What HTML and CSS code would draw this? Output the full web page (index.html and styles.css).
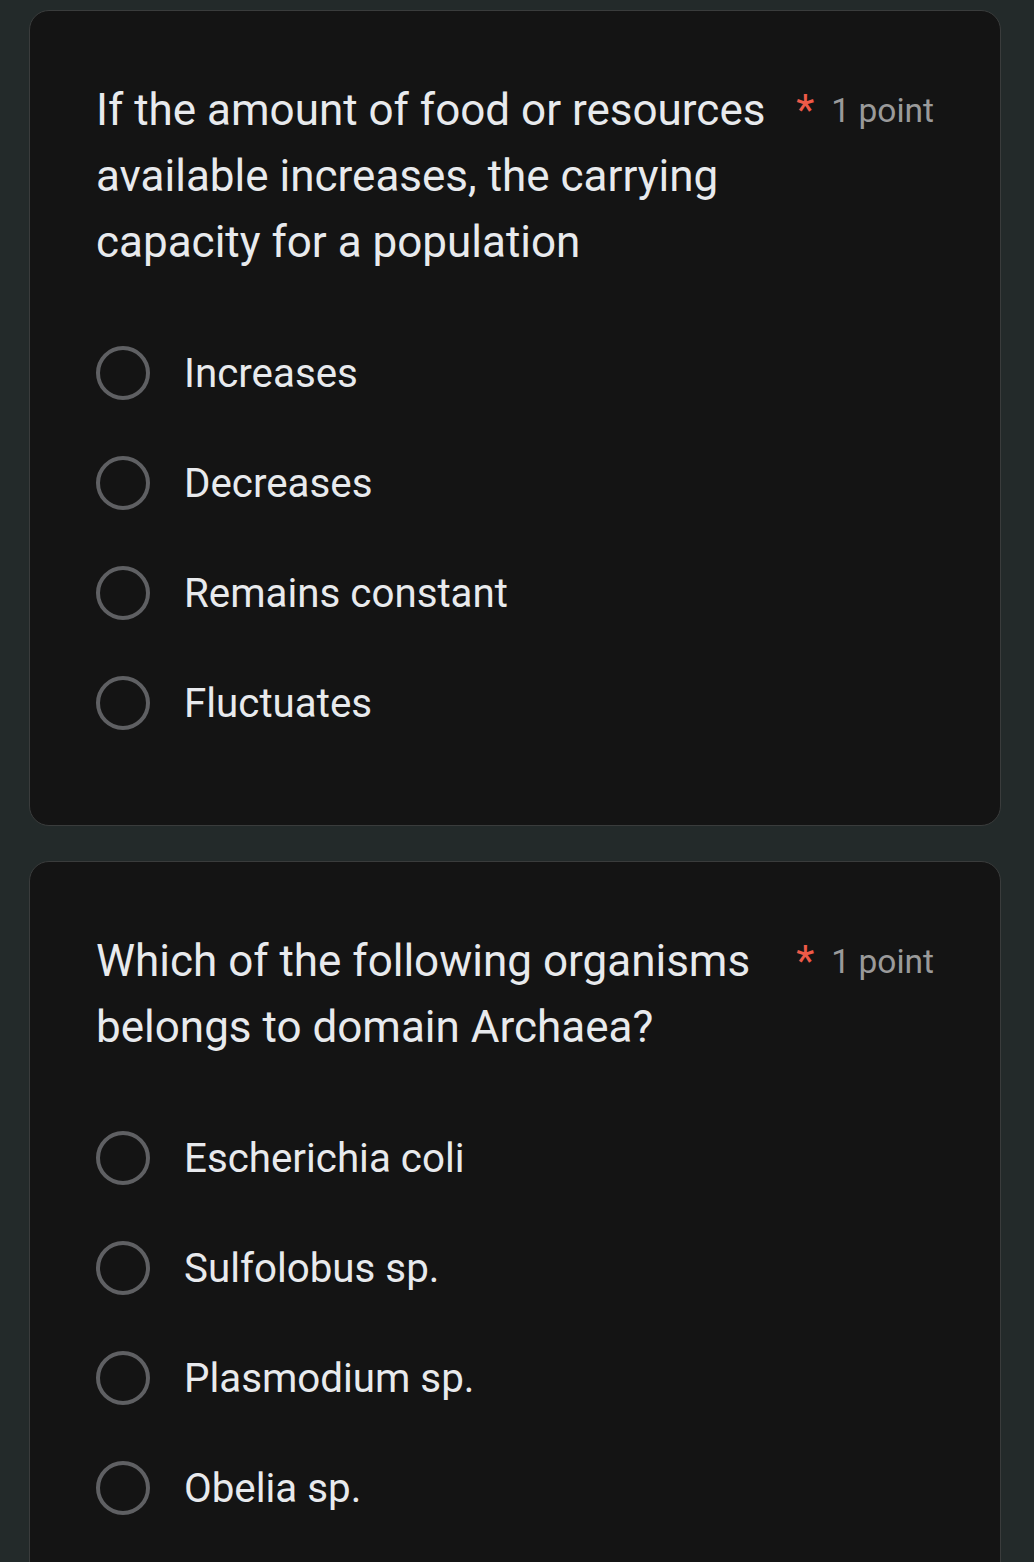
FILE: index.html
```html
<!DOCTYPE html>
<html lang="en">
<head>
    <meta charset="UTF-8">
    <meta name="viewport" content="width=device-width, initial-scale=1.0">
    <title>Quiz</title>
    <link rel="stylesheet" href="styles.css">
</head>
<body>
    <div class="form-list">
        <!-- Question 1 -->
        <div class="question-card">
            <div class="question-head">
                <div class="question-title">If the amount of food or resources available increases, the carrying capacity for a population</div>
                <div class="question-meta"><span class="required">*</span><span class="points">1 point</span></div>
            </div>
            <div class="options">
                <label class="option"><span class="radio"></span><span class="option-text">Increases</span></label>
                <label class="option"><span class="radio"></span><span class="option-text">Decreases</span></label>
                <label class="option"><span class="radio"></span><span class="option-text">Remains constant</span></label>
                <label class="option"><span class="radio"></span><span class="option-text">Fluctuates</span></label>
            </div>
        </div>

        <!-- Question 2 -->
        <div class="question-card">
            <div class="question-head">
                <div class="question-title">Which of the following organisms belongs to domain Archaea?</div>
                <div class="question-meta"><span class="required">*</span><span class="points">1 point</span></div>
            </div>
            <div class="options">
                <label class="option"><span class="radio"></span><span class="option-text">Escherichia coli</span></label>
                <label class="option"><span class="radio"></span><span class="option-text">Sulfolobus sp.</span></label>
                <label class="option"><span class="radio"></span><span class="option-text">Plasmodium sp.</span></label>
                <label class="option"><span class="radio"></span><span class="option-text">Obelia sp.</span></label>
            </div>
        </div>
    </div>
</body>
</html>
```

FILE: styles.css
```css
/* Page */
body {
    margin: 0;
    padding: 0;
    background-color: #232a2a;
    font-family: Roboto, "Noto Sans", Arial, sans-serif;
    color: #e8eaed;
}

.form-list {
    display: flex;
    flex-direction: column;
    gap: 35px;
    padding: 10px 33px 0 29px;
}

/* Card */
.question-card {
    background-color: #141414;
    border: 1px solid #3a3c3c;
    border-radius: 20px;
    padding: 66px 66px 67px 66px;
}

.question-head {
    display: flex;
    align-items: flex-start;
    margin-bottom: 43px;
}

.question-title {
    flex: 1;
    font-size: 44px;
    line-height: 66px;
    color: #e8eaed;
    padding-right: 16px;
}

.question-meta {
    display: flex;
    align-items: center;
    height: 66px;
    white-space: nowrap;
}

.required {
    color: #ee5a48;
    font-size: 42px;
    margin-right: 17px;
    position: relative;
    top: -1px;
}

.points {
    color: #9a9a9a;
    font-size: 33.5px;
}

/* Options */
.option {
    display: flex;
    align-items: center;
    height: 110px;
    cursor: pointer;
}

.radio {
    width: 54px;
    height: 54px;
    box-sizing: border-box;
    border: 4.5px solid #5f6063;
    border-radius: 50%;
    flex-shrink: 0;
}

.option-text {
    margin-left: 34px;
    font-size: 40.3px;
    color: #e8eaed;
}
```
